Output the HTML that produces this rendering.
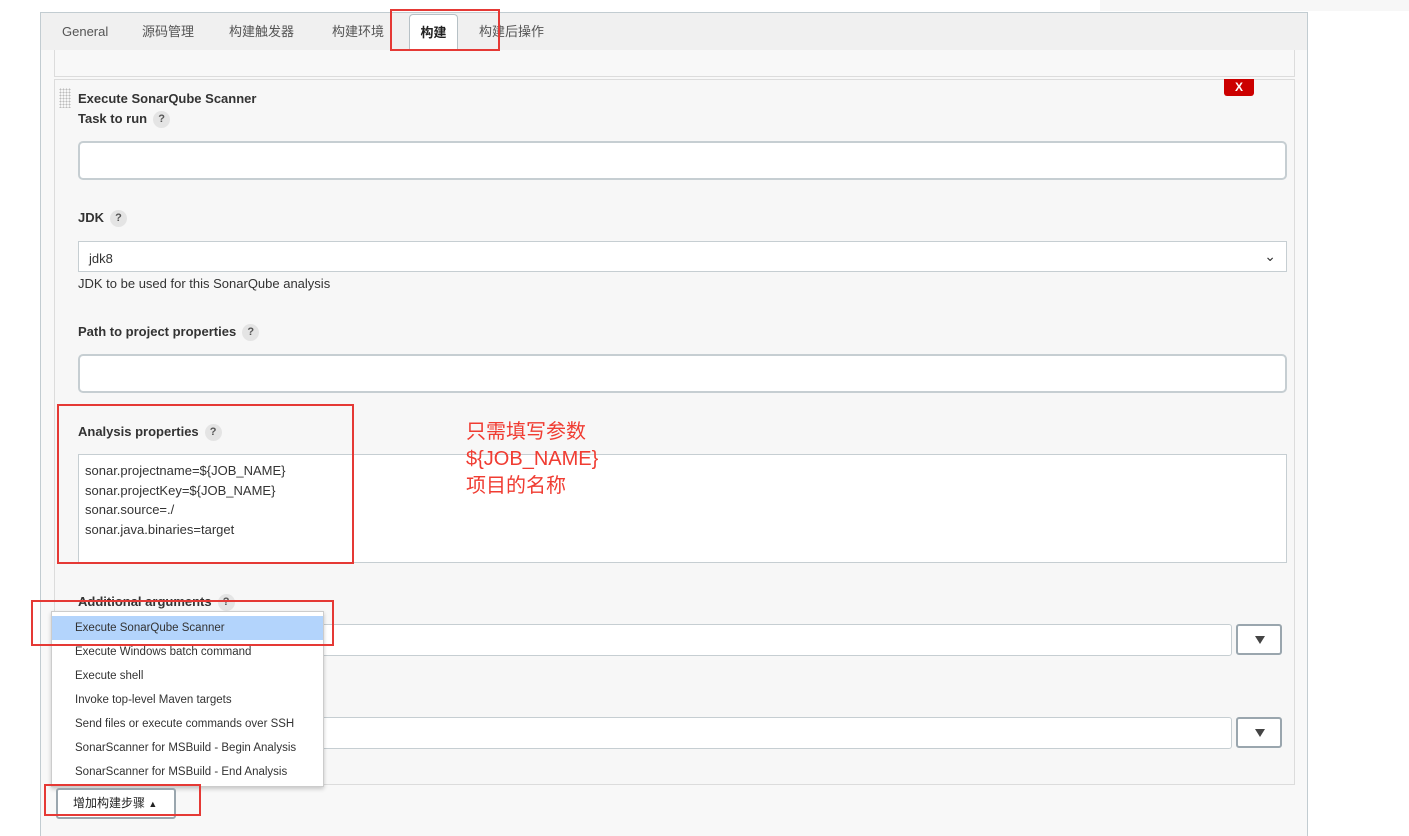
<!DOCTYPE html>
<html><head><meta charset="utf-8"><style>
*{box-sizing:border-box;margin:0;padding:0}
body{width:1409px;height:836px;background:#fff;position:relative;overflow:hidden;font-family:"Liberation Sans","Noto Sans CJK SC",sans-serif;font-size:13px;color:#333}
.a{position:absolute}
.lbl{font-weight:bold;font-size:13px;color:#333}
.q{display:inline-block;width:17px;height:17px;border-radius:50%;background:#e4e4e4;color:#555;font-size:11px;text-align:center;line-height:17px;font-weight:bold;margin-left:6px;vertical-align:middle}
.in{background:#fff;border:2px solid #c6ced2;border-radius:5px}
.tab{position:absolute;top:22px;height:20px;line-height:20px;font-size:13px;color:#555}
.red{border:2px solid #e53935}
.mi{height:24px;line-height:24px;padding-left:23px;font-size:11.5px;color:#333}
.dd{position:absolute;width:46px;height:31px;border:2px solid #9aa6ae;border-radius:3px;background:#fff}
.dd:after{content:"";position:absolute;left:17px;top:10px;border-left:5px solid transparent;border-right:5px solid transparent;border-top:8px solid #444}
</style></head><body>
<div class="a" style="left:1100px;top:0;width:309px;height:11px;background:#f7f7f7"></div>
<div class="a" style="left:40px;top:12px;width:1268px;height:824px;background:#f8f8f8;border:1px solid #c2ccd1;border-bottom:none"></div>
<div class="a" style="left:41px;top:13px;width:1266px;height:37px;background:#f0f0f0"></div>
<div class="tab" style="left:62px">General</div>
<div class="tab" style="left:142px">源码管理</div>
<div class="tab" style="left:229px">构建触发器</div>
<div class="tab" style="left:332px">构建环境</div>
<div class="a" style="left:409px;top:14px;width:49px;height:37px;background:#fff;border:1px solid #b7c1c6;border-bottom:none;border-radius:4px 4px 0 0;text-align:center;line-height:36px;font-weight:bold;color:#222">构建</div>
<div class="tab" style="left:479px">构建后操作</div>
<div class="a red" style="left:390px;top:9px;width:110px;height:42px"></div>
<div class="a" style="left:54px;top:50px;width:1241px;height:27px;border:1px solid #dcdcdc;border-top:none"></div>
<div class="a" style="left:54px;top:79px;width:1241px;height:706px;border:1px solid #dcdcdc;background:#f7f7f7"></div>
<div class="a" style="left:59px;top:88px;width:12px;height:20px;background-image:radial-gradient(#bbb 0.8px,transparent 0.9px);background-size:3px 3px"></div>
<div class="a lbl" style="left:78px;top:91px">Execute SonarQube Scanner</div>
<div class="a" style="left:1224px;top:79px;width:30px;height:17px;background:#cc0000;border-radius:0 0 3px 3px;color:#fff;font-weight:bold;font-size:12px;text-align:center;line-height:17px">X</div>
<div class="a lbl" style="left:78px;top:111px">Task to run<span class="q">?</span></div>
<div class="a in" style="left:78px;top:141px;width:1209px;height:39px"></div>
<div class="a lbl" style="left:78px;top:210px">JDK<span class="q">?</span></div>
<div class="a" style="left:78px;top:241px;width:1209px;height:31px;background:#fff;border:1px solid #c6ced2;padding:9px 10px;font-size:13px">jdk8<span style="position:absolute;right:10px;top:6px;font-size:14px;color:#333">⌄</span></div>
<div class="a" style="left:78px;top:276px;font-size:13px">JDK to be used for this SonarQube analysis</div>
<div class="a lbl" style="left:78px;top:324px">Path to project properties<span class="q">?</span></div>
<div class="a in" style="left:78px;top:354px;width:1209px;height:39px"></div>
<div class="a lbl" style="left:78px;top:424px">Analysis properties<span class="q">?</span></div>
<div class="a" style="left:78px;top:454px;width:1209px;height:109px;background:#fff;border:1px solid #c6ced2;padding:6px 6px;line-height:19.5px;font-size:13px">sonar.projectname=${JOB_NAME}<br>sonar.projectKey=${JOB_NAME}<br>sonar.source=./<br>sonar.java.binaries=target</div>
<div class="a red" style="left:57px;top:404px;width:297px;height:160px"></div>
<div class="a" style="left:466px;top:419px;color:#f03c32;font-size:20px;line-height:27px">只需填写参数<br>${JOB_NAME}<br>项目的名称</div>
<div class="a lbl" style="left:78px;top:594px">Additional arguments<span class="q">?</span></div>
<div class="a" style="left:78px;top:624px;width:1154px;height:32px;background:#fff;border:1px solid #c6ced2;border-radius:3px"></div>
<div class="dd" style="left:1236px;top:624px"></div>
<div class="a" style="left:78px;top:717px;width:1154px;height:32px;background:#fff;border:1px solid #c6ced2;border-radius:3px"></div>
<div class="dd" style="left:1236px;top:717px"></div>
<div class="a" style="left:51px;top:611px;width:273px;height:176px;background:#fff;border:1px solid #ccc;box-shadow:0 2px 4px rgba(0,0,0,.2);padding-top:4px">
<div class="mi" style="background:#b3d4fc">Execute SonarQube Scanner</div>
<div class="mi">Execute Windows batch command</div>
<div class="mi">Execute shell</div>
<div class="mi">Invoke top-level Maven targets</div>
<div class="mi">Send files or execute commands over SSH</div>
<div class="mi">SonarScanner for MSBuild - Begin Analysis</div>
<div class="mi">SonarScanner for MSBuild - End Analysis</div>
</div>
<div class="a red" style="left:31px;top:600px;width:303px;height:46px"></div>
<div class="a" style="left:56px;top:788px;width:120px;height:31px;background:#fff;border:2px solid #9aa6ae;border-radius:3px;font-size:12px;line-height:27px;padding-left:15px;color:#222">增加构建步骤 <span style="font-size:9px">▲</span></div>
<div class="a red" style="left:44px;top:784px;width:157px;height:32px"></div>
</body></html>
